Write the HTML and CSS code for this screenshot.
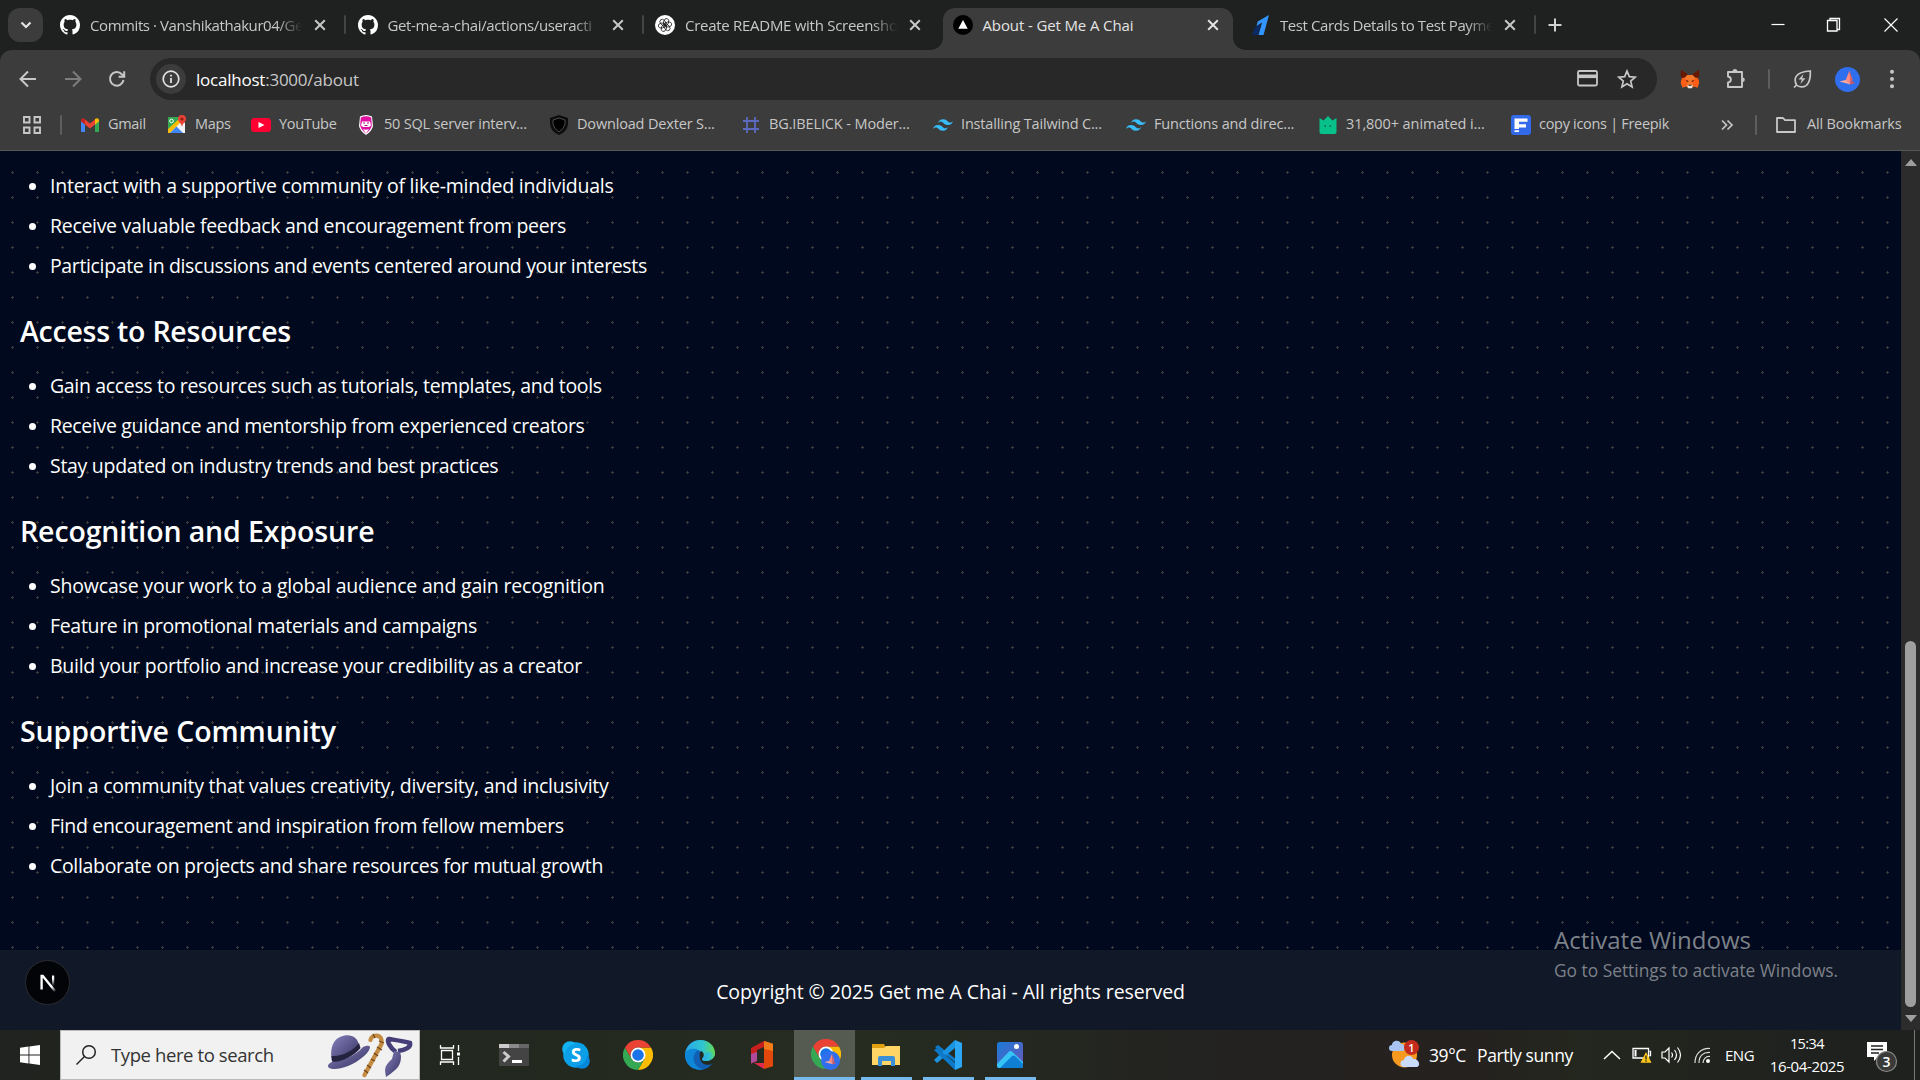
FILE: index.html
```html
<!DOCTYPE html>
<html lang="en">
<head>
<meta charset="utf-8">
<title>About - Get Me A Chai</title>
<link rel="stylesheet" href="styles.css">
</head>
<body>
<svg class="defs" aria-hidden="true">
  <symbol id="close" viewBox="0 0 20 20"><path d="M5.2 5.2l9.6 9.6M14.8 5.2l-9.6 9.6" stroke="currentColor" stroke-width="2" fill="none"/></symbol>
  <symbol id="github" viewBox="0 0 16 16"><path fill="#fff" d="M8 0C3.58 0 0 3.58 0 8c0 3.54 2.29 6.53 5.47 7.59.4.07.55-.17.55-.38 0-.19-.01-.82-.01-1.49-2.01.37-2.53-.49-2.69-.94-.09-.23-.48-.94-.82-1.13-.28-.15-.68-.52-.01-.53.63-.01 1.08.58 1.23.82.72 1.21 1.87.87 2.33.66.07-.52.28-.87.51-1.07-1.78-.2-3.64-.89-3.64-3.95 0-.87.31-1.59.82-2.15-.08-.2-.36-1.02.08-2.12 0 0 .67-.21 2.2.82.64-.18 1.32-.27 2-.27s1.36.09 2 .27c1.53-1.04 2.2-.82 2.2-.82.44 1.1.16 1.92.08 2.12.51.56.82 1.27.82 2.15 0 3.07-1.87 3.75-3.65 3.95.29.25.54.73.54 1.48 0 1.07-.01 1.93-.01 2.2 0 .21.15.46.55.38A8.01 8.01 0 0016 8c0-4.42-3.58-8-8-8z"/></symbol>
  <symbol id="tailwind" viewBox="0 0 24 24"><path fill="#38bdf8" d="M12 5c-3.2 0-5.2 1.6-6 4.8 1.2-1.6 2.6-2.2 4.2-1.8.9.2 1.6.9 2.3 1.6C13.700 10.900 15 12 18 12c3.200 0 5.200-1.600 6-4.800-1.200 1.600-2.600 2.200-4.200 1.800-.9-.2-1.600-.9-2.300-1.600C16.300 6.100 15 5 12 5zM6 12c-3.200 0-5.200 1.600-6 4.800 1.200-1.600 2.600-2.200 4.200-1.800.9.2 1.600.9 2.300 1.600C7.700 17.900 9 19 12 19c3.200 0 5.200-1.600 6-4.800-1.200 1.600-2.600 2.200-4.200 1.800-.9-.2-1.600-.9-2.300-1.600C10.300 13.100 9 12 6 12z"/></symbol>
  <symbol id="chrome" viewBox="0 0 48 48"><path fill="#fbbc04" d="M24 12h20.800A24 24 0 0124 48l10.400-18z"/><path fill="#34a853" d="M3.200 12A24 24 0 0024 48l10.400-18A12 12 0 0113.600 30z"/><path fill="#ea4335" d="M24 12h20.800A24 24 0 003.200 12l10.400 18A12 12 0 0124 12z"/><circle cx="24" cy="24" r="12" fill="#fff"/><circle cx="24" cy="24" r="9.300" fill="#1a73e8"/></symbol>
  <symbol id="origami" viewBox="0 0 25 25"><circle cx="12.500" cy="12.500" r="12.500" fill="#2f6fee"/><path fill="#ff8a80" d="M14.500 3.500l-4 10 5 4z"/><path fill="#e8605c" d="M14.500 3.500l3 9-2 5z"/><path fill="#ffab9f" d="M4.500 14.500l6-1.500 5 4.500z"/><path fill="#d4525a" d="M15 17.500l5-1.500-3-2z"/></symbol>
</svg>

<header class="tabstrip">
  <button class="tab-search"><svg width="14" height="14" viewBox="0 0 14 14"><path d="M2.500 4.500L7 9l4.500-4.500" fill="none" stroke="#e3e3e3" stroke-width="2.200"/></svg></button>
  <div class="tab"><svg class="fav"><use href="#github"/></svg><span class="title fade t1">Commits · Vanshikathakur04/Ge</span><svg class="x"><use href="#close"/></svg></div>
  <div class="tab"><svg class="fav"><use href="#github"/></svg><span class="title fade t2">Get-me-a-chai/actions/useracti</span><svg class="x"><use href="#close"/></svg></div>
  <div class="tab bare"><svg class="fav" viewBox="0 0 20 20"><circle cx="10" cy="10" r="10" fill="#fff"/><g fill="none" stroke="#222" stroke-width=".8"><ellipse cx="10" cy="7" rx="2.500" ry="3.800" transform="rotate(20 10 10)"/><ellipse cx="10" cy="7" rx="2.500" ry="3.800" transform="rotate(80 10 10)"/><ellipse cx="10" cy="7" rx="2.500" ry="3.800" transform="rotate(140 10 10)"/><ellipse cx="10" cy="7" rx="2.500" ry="3.800" transform="rotate(200 10 10)"/><ellipse cx="10" cy="7" rx="2.500" ry="3.800" transform="rotate(260 10 10)"/><ellipse cx="10" cy="7" rx="2.500" ry="3.800" transform="rotate(320 10 10)"/></g></svg><span class="title fade t3">Create README with Screensho</span><svg class="x"><use href="#close"/></svg></div>
  <div class="tab active"><svg class="fav" viewBox="0 0 20 20"><circle cx="10" cy="10" r="10" fill="#000"/><path d="M10 5l4.700 8.700H5.300z" fill="#fff"/></svg><span class="title t4">About - Get Me A Chai</span><svg class="x"><use href="#close"/></svg></div>
  <div class="tab"><svg class="fav" viewBox="0 0 20 20"><path fill="#0b2a63" d="M2 20l3-8 6-3-3 11z"/><path fill="#3395ff" d="M19 0l-5.500 20H8.500l3.600-12.500L6.500 11l1.200-4.500z"/></svg><span class="title fade t5">Test Cards Details to Test Payme</span><svg class="x"><use href="#close"/></svg></div>
  <svg class="newtab" viewBox="0 0 20 20"><path d="M10 3.500v13M3.500 10h13" stroke="#d0d0d0" stroke-width="2"/></svg>
  <div class="winctl">
    <svg viewBox="0 0 16 16"><path d="M1.500 7.500h13" stroke="#fff" stroke-width="1.200"/></svg>
    <svg viewBox="0 0 16 16"><path d="M1.500 3.500h9.500v10.500H1.500zM4 3.500v-2h9.500V12.500h-2" fill="none" stroke="#fff" stroke-width="1.300"/></svg>
    <svg viewBox="0 0 16 16"><path d="M1.500 1.500l13 13M14.500 1.500l-13 13" stroke="#fff" stroke-width="1.200"/></svg>
  </div>
</header>

<section class="chrome">
  <div class="toolbar">
    <svg class="nav" viewBox="0 0 20 20"><path d="M18 10H3M10 2.500L2.500 10l7.500 7.500" fill="none" stroke="#c7c7c7" stroke-width="2"/></svg>
    <svg class="nav" viewBox="0 0 20 20"><path d="M2 10h15M10 2.500l7.500 7.500-7.500 7.500" fill="none" stroke="#7d7d7d" stroke-width="2"/></svg>
    <svg class="nav" viewBox="0 0 20 20"><path d="M16.500 11A6.800 6.800 0 1114.800 5.200L17 7.300M17.200 2.200v5.600h-5.600" fill="none" stroke="#c7c7c7" stroke-width="2"/></svg>
    <div class="omnibox">
      <span class="site"><svg width="18" height="18" viewBox="0 0 18 18"><circle cx="9" cy="9" r="7.800" fill="none" stroke="#e3e3e3" stroke-width="1.700"/><path d="M9 8v5M9 4.800v1.800" stroke="#e3e3e3" stroke-width="1.800"/></svg></span>
      <span class="url"><b>localhost</b>:3000/about</span>
      <svg width="21" height="20" viewBox="0 0 21 20"><rect x="1" y="2" width="19" height="14.500" rx="1.500" fill="none" stroke="#c7c7c7" stroke-width="1.800"/><path d="M1 7.300h19" stroke="#c7c7c7" stroke-width="3.600"/></svg>
      <svg width="20" height="20" viewBox="0 0 20 20"><path d="M10 2l2.300 5.600 6 .5-4.600 3.900 1.400 5.900L10 14.700 4.900 17.900l1.400-5.900L1.700 8.100l6-.5z" fill="none" stroke="#c7c7c7" stroke-width="1.700"/></svg>
    </div>
    <div class="actions">
      <svg viewBox="0 0 20 20"><path fill="#f5772c" d="M3 6h14l2 7.500-1.500 5-4-1L12 19H8l-1.500-1.500-4 1L.8 13.500z"/><path fill="#ff5c16" d="M2.500 8L8 12l-1.500 5-4 1.500L.8 13.500zM17.500 8L12 12l1.500 5 4 1.500 1.700-5z"/><path fill="#661800" d="M1.200.8l6.500 4.700L5 8.500 2 9 .5 6zM18.800.8l-6.500 4.700L15 8.500l3 .5L19.500 6z"/><path fill="#3a1408" d="M5.500 10.800l3 1.200-.5 1.200zM14.500 10.800l-3 1.200.5 1.200z"/><path fill="#efe5df" d="M7.500 16h5l-.5 3.200H8z"/><path fill="#222" d="M8.500 15.800h3v1h-3z"/></svg>
      <svg viewBox="0 0 20 20"><path fill="none" stroke="#c7c7c7" stroke-width="1.900" stroke-linejoin="round" d="M2 3h14v15H2v-4.500c3.800-.5 3.800-5.500 0-6z"/><path fill="#c7c7c7" d="M6.500 2.500a2.500 2.500 0 015 0zM16.500 8.500a2.300 2.300 0 010 4.600z"/></svg>
      <i class="sep"></i>
      <svg viewBox="0 0 20 20"><path d="M2 18.500l2.500-2.500C1.500 10 2.500 3 18.300 2 18.800 12 15.500 18.200 9.500 17.800 7 17.800 5.500 17 4.500 16" fill="none" stroke="#c7c7c7" stroke-width="1.700"/><path d="M11.500 5l-5 5.500h3.300l-1.500 4.500 5.200-5.700h-3.300z" fill="#c7c7c7"/></svg>
      <svg class="avatar"><use href="#origami"/></svg>
      <svg viewBox="0 0 20 20" fill="#c7c7c7"><circle cx="10" cy="2.800" r="2"/><circle cx="10" cy="10" r="2"/><circle cx="10" cy="17.200" r="2"/></svg>
    </div>
  </div>
  <nav class="bookmarks">
    <svg class="apps" viewBox="0 0 18 18"><path d="M1 1h5.500v5.500H1zM11.500 1H17v5.500h-5.500zM1 11.500h5.500V17H1zM11.500 11.500H17V17h-5.500z" fill="none" stroke="#c7c7c7" stroke-width="1.900"/></svg>
    <i class="sep"></i>
    <a><svg viewBox="0 0 20 20"><path fill="#4285f4" d="M1 5l4 3v9H2a1 1 0 01-1-1z"/><path fill="#34a853" d="M19 5l-4 3v9h3a1 1 0 001-1z"/><path fill="#ea4335" d="M5 4.500l5 4 5-4v5l-5 4-5-4z"/><path fill="#c5221f" d="M1 5.500C1 3 3.500 2.500 5 4v5.500l-4-3z"/><path fill="#fbbc04" d="M19 5.500C19 3 16.500 2.500 15 4v5.500l4-3z"/></svg><span class="b1">Gmail</span></a>
    <a><svg viewBox="0 0 20 20"><path fill="#34a853" d="M1 2h15v16H1z"/><path fill="#f1f3f4" d="M1 16L14 4l4 4v10H4z"/><path fill="#fbbc04" d="M1 14L13 3l2 3L3 18H1z"/><path fill="#4285f4" d="M3 18l6.500-6.500L16 18z"/><circle cx="4.500" cy="6" r="1.800" fill="none" stroke="#fff"/><path fill="#ea4335" d="M15 0a4 4 0 014 4c0 3-3.500 4-4 8-.5-4-4-5-4-8a4 4 0 014-4z"/><circle cx="15" cy="4" r="1.500" fill="#8e1a13"/></svg><span class="b2">Maps</span></a>
    <a><svg viewBox="0 0 20 20"><rect y="3" width="20" height="14" rx="3.500" fill="#f03"/><path d="M7.500 7l6 3-6 3z" fill="#fff"/></svg><span class="b3">YouTube</span></a>
    <a><svg viewBox="0 0 20 20"><path fill="#fff" d="M4 1.500q6-3 12 0l1 9.500q-1 5-7 9-6-4-7-9z"/><path fill="#e010a0" d="M4.800 2.500q5-2.500 10.400 0l.6 8q-.8 4-5.800 8-5-4-5.800-8z"/><path fill="#fff" d="M6 6.500h8l1 4-2 1.500H7l-2-1.500zM7 14q3 1.500 6 0l-3 4.500z"/><path d="M7 8h2M11 8h2M8.500 10.500h3" stroke="#b00b80"/></svg><span class="b4">50 SQL server interv...</span></a>
    <a><svg viewBox="0 0 20 20"><path fill="#0d0d0d" d="M10 0l9 3v6q-1 8-9 11Q2 17 1 9V3z"/><path fill="#000" stroke="#4a4a4a" d="M10 3l6 2v4q-1 5-6 8-5-3-6-8V5z"/></svg><span class="b5">Download Dexter S...</span></a>
    <a><svg viewBox="0 0 20 20"><path d="M6 2v16M14 2v16M2 6h16M2 14h16" stroke="#5c6bc0" stroke-width="1.800"/></svg><span class="b6">BG.IBELICK - Moder...</span></a>
    <a><svg><use href="#tailwind"/></svg><span class="b7">Installing Tailwind C...</span></a>
    <a><svg><use href="#tailwind"/></svg><span class="b8">Functions and direc...</span></a>
    <a><svg viewBox="0 0 20 20"><path fill="#08c18a" d="M1.500 3l4 2.500L10 1l4.500 4.500 4-2.500v14a2 2 0 01-2 2h-13a2 2 0 01-2-2z"/><path d="M6.500 11h1.500M11.500 11h1.500" stroke="#064" stroke-width="1.500"/></svg><span class="b9">31,800+ animated i...</span></a>
    <a><svg viewBox="0 0 20 20"><rect width="20" height="20" rx="3" fill="#336aea"/><path d="M3.500 3.500h13v3.300H8v2.400h7v3.300H8V14H3.500zM3.500 15.200h4.500v1.800H3.500z" fill="#fff"/></svg><span class="b10">copy icons | Freepik</span></a>
    <svg class="more" viewBox="0 0 14 14"><path d="M2 2.500L6.500 7 2 11.500M7.500 2.500L12 7l-4.500 4.500" fill="none" stroke="#c7c7c7" stroke-width="1.700"/></svg>
    <i class="sep"></i>
    <a class="all"><svg viewBox="0 0 20 20"><path d="M1 3h6l2 2.200h10V17H1z" fill="none" stroke="#c7c7c7" stroke-width="1.800" stroke-linejoin="round"/></svg><span class="b11">All Bookmarks</span></a>
  </nav>
</section>

<main class="viewport">
  <div class="page">
    <div class="benefits">
      <ul>
        <li><span class="l1">Interact with a supportive community of like-minded individuals</span></li>
        <li><span class="l2">Receive valuable feedback and encouragement from peers</span></li>
        <li><span class="l3">Participate in discussions and events centered around your interests</span></li>
      </ul>
      <h2><span class="h1">Access to Resources</span></h2>
      <ul>
        <li><span class="l4">Gain access to resources such as tutorials, templates, and tools</span></li>
        <li><span class="l5">Receive guidance and mentorship from experienced creators</span></li>
        <li><span class="l6">Stay updated on industry trends and best practices</span></li>
      </ul>
      <h2><span class="h2">Recognition and Exposure</span></h2>
      <ul>
        <li><span class="l7">Showcase your work to a global audience and gain recognition</span></li>
        <li><span class="l8">Feature in promotional materials and campaigns</span></li>
        <li><span class="l9">Build your portfolio and increase your credibility as a creator</span></li>
      </ul>
      <h2><span class="h3">Supportive Community</span></h2>
      <ul>
        <li><span class="l10">Join a community that values creativity, diversity, and inclusivity</span></li>
        <li><span class="l11">Find encouragement and inspiration from fellow members</span></li>
        <li><span class="l12">Collaborate on projects and share resources for mutual growth</span></li>
      </ul>
    </div>
    <footer><span>Copyright © 2025 Get me A Chai - All rights reserved</span></footer>
  </div>
  <div class="scrollbar"><i class="up"></i><div class="track"><div class="thumb"></div></div><i class="down"></i></div>
  <div class="devtools"><svg width="18" height="20" viewBox="0 0 18 20"><defs><linearGradient id="fadeDown" x1="0" y1="0" x2="0" y2="1"><stop offset=".3" stop-color="#fff"/><stop offset="1" stop-color="#fff" stop-opacity="0"/></linearGradient><linearGradient id="fadeEnd" gradientUnits="userSpaceOnUse" x1="2" y1="2" x2="17" y2="19"><stop offset=".7" stop-color="#fff"/><stop offset="1" stop-color="#fff" stop-opacity="0"/></linearGradient></defs><path d="M2.600 16.500V3h1.200L16 18" fill="none" stroke="url(#fadeEnd)" stroke-width="2.300"/><path fill="url(#fadeDown)" d="M13 2.500h2.200V13H13z"/></svg></div>
  <div class="watermark"><p>Activate Windows</p><p class="small">Go to Settings to activate Windows.</p></div>
</main>

<footer class="taskbar">
  <div class="start"><svg width="20" height="20" viewBox="0 0 20 20" fill="#fff"><path d="M0 2.800l8.500-1.200v8H0zM9.400 1.500L20 0v9.600H9.400zM0 10.500h8.500v8L0 17.300zM9.400 10.500H20V20L9.400 18.600z"/></svg></div>
  <div class="search">
    <svg width="22" height="22" viewBox="0 0 22 22"><circle cx="14" cy="8" r="6.300" fill="none" stroke="#222" stroke-width="1.500"/><path d="M9.500 12.500L1.500 20.500" stroke="#222" stroke-width="1.500"/></svg>
    <span class="hint">Type here to search</span>
    <svg width="86" height="48" viewBox="0 0 86 48"><defs><linearGradient id="felt" x1="0" y1="0" x2="1" y2="1"><stop offset="0" stop-color="#8580bd"/><stop offset="1" stop-color="#37325f"/></linearGradient></defs><path fill="url(#felt)" d="M0 35c0 4 10 4 20 0C32 30 42 21 42 16c-1-2-4-1-7 0-8 9-21 14-29 14-3 1-6 3-6 5z"/><path fill="url(#felt)" d="M4 30C2 21 3 10 12 6c9-4 18-1 19 9-6 9-18 16-27 15z"/><path fill="#25223f" d="M3.500 25C13 26 25 20 31 12l1.500 5C26 25 13 32 4 30.500z"/><path d="M42.500 9c1-6 13-7 11 4L36.500 44" fill="none" stroke="#c38c42" stroke-width="4.300" stroke-linecap="round"/><path d="M45 3l2 4M51 10l5 2M49 16l5 3M46 22l4 3M43 28l4 2M39 34l4 3M36 39l4 3" stroke="#6f431b" stroke-width="1.300"/><path d="M68 21C62 17 58 9 61 8c6 1 14 2 21 4 1 4-4 7-12 8" fill="none" stroke="#453e78" stroke-width="4.500"/><path fill="url(#felt)" d="M66 20l6 1 1 4c0 9-3 13-15 21-1-7-3-10 6-18z"/></svg>
  </div>
  <div class="apps-row">
    <div class="view"><svg width="22" height="22" viewBox="0 0 22 22"><path d="M2.500 6.500h11v9h-11zM1.500 1v3h13V1M1.500 21v-3h13v3M19.500 1v6M19.500 13v8" fill="none" stroke="#fff" stroke-width="1.300"/><path fill="#fff" d="M18 8.500h3v3h-3z"/></svg></div>
    <div><svg width="30" height="22" viewBox="0 0 30 22"><rect width="30" height="22" rx="1" fill="#444"/><path fill="#ccc" d="M0 0h10v4H0z"/><path fill="#8a8a8a" d="M10 0h10v4H10z"/><path fill="#666" d="M20 0h10v4H20z"/><path d="M4.500 8l5 4.500-5 5" fill="none" stroke="#ccc" stroke-width="3"/><path d="M13 17.500h10" stroke="#fff" stroke-width="3"/></svg></div>
    <div><svg width="28" height="28" viewBox="0 0 28 28"><circle cx="14" cy="14" r="12.800" fill="#0aa1e8"/><circle cx="8" cy="8" r="7.800" fill="#12b3f0"/><circle cx="20" cy="20" r="7.800" fill="#0787db"/><circle cx="14" cy="14" r="11" fill="#0a9fe6"/><text x="14" y="21" text-anchor="middle" class="skype">S</text></svg></div>
    <div><svg width="30" height="30"><use href="#chrome"/></svg></div>
    <div><svg width="30" height="30" viewBox="0 0 30 30"><defs><linearGradient id="wave"><stop offset="0" stop-color="#2aa7ea"/><stop offset=".6" stop-color="#30c6d0"/><stop offset="1" stop-color="#63d94f"/></linearGradient></defs><circle cx="15" cy="15" r="15" fill="#1160b5"/><path fill="url(#wave)" d="M0 13C2 5 8 0 15 0c9 0 15 6 15 13 0 5-4 8-9 8-3 0-4-1-4-2 2-3 1-6-2-8C10 8 3 9 0 13z"/><path fill="#0f87d8" d="M0 13c3-5 10-5 13-3-5 3-6 10-2 15 2 3 5 4 8 4C8 32-1 24 0 13z"/><path fill="#232a20" d="M16 11c3 1 4 5 1 8 0 1 1 2 4 2 4 0 7-2 9-5v6l-2 1c-5 4-12 1-13-4-.5-3-1-6 1-8z"/><path fill="url(#wave)" d="M17 19c0 1 1 2 4 2 5 0 9-4 9-8l-8-1z"/></svg></div>
    <div><svg width="24" height="28" viewBox="0 0 24 28"><path fill="#c8201e" d="M1 7l13-7v6L7 9v11l-6 2.500z"/><path fill="#b04a9a" d="M1 13l6-2v9l-6 2.500z"/><path fill="#e2480c" d="M14 0l9 2.700v22.600L14 28z"/><path fill="#f27b1b" d="M14 0l9 2.700V10l-9-2z"/><path fill="#e12a4c" d="M4 22h10v6z"/></svg></div>
    <div class="running current"><svg width="32" height="32" viewBox="0 0 32 32"><use href="#chrome" width="30" height="30" x="2"/><use href="#origami" x="12" y="12" width="19" height="19"/></svg></div>
    <div class="running"><svg width="28" height="24" viewBox="0 0 28 24"><path fill="#e0a010" d="M0 1h12l2 4H0z"/><path fill="#ffd666" d="M0 5h12l2-2h14v19H0z"/><path fill="#3a8fd6" d="M6 23V15a2 2 0 012-2h13a2 2 0 012 2v8h-4v-5h-9v5z"/></svg></div>
    <div class="running"><svg width="30" height="30" viewBox="0 0 30 30"><path fill="#0c7ac8" d="M22 8v14L2 7l3-2 19 15z"/><path fill="#1a94e0" d="M1 20L22 0v8L4 23z"/><path fill="#0c7ac8" d="M1 10l3-2 18 15v7z"/><path fill="#2ba7f5" d="M22 0l7 3v24l-7 3z"/></svg></div>
    <div class="running"><svg width="26" height="26" viewBox="0 0 26 26"><defs><linearGradient id="sky" x1="0" y1="0" x2="1" y2="1"><stop offset="0" stop-color="#1a7bd8"/><stop offset="1" stop-color="#6c56b8"/></linearGradient><clipPath id="frame"><rect width="26" height="26" rx="2.500"/></clipPath></defs><g clip-path="url(#frame)"><path fill="url(#sky)" d="M0 0h26v26H0z"/><path fill="#36c3f6" d="M0 22L12 9.500q1.500-1 3 0L26 20v6H0z"/><path fill="#0f7fd6" d="M3 26l12-12q1.500-1 3 0l8 8v4z"/></g><circle cx="19.500" cy="4.500" r="2.500" fill="#fff"/></svg></div>
  </div>
  <div class="tray">
    <svg class="weather" width="31" height="30" viewBox="0 0 31 30"><circle cx="15.500" cy="15" r="12.500" fill="#f59a1f"/><path fill="#a9c4f0" d="M3 11a3 3 0 010-6c0-5 8-6 9-1 4-1 5 6 2 7z"/><path fill="#c9dafa" d="M15 27a3.500 3.500 0 010-7c1-6 9-5 9-1 6-1 8 7 4 8z"/><circle cx="22.500" cy="7.500" r="7.500" fill="#c42b1c"/><text x="22.500" y="11.500" text-anchor="middle" class="count">1</text></svg>
    <span class="temp">39°C</span><span class="cond">Partly sunny</span>
    <svg class="chev" width="18" height="10" viewBox="0 0 18 10"><path d="M1 9l8-7.500L17 9" fill="none" stroke="#fff" stroke-width="1.500"/></svg>
    <svg class="batt" width="20" height="16" viewBox="0 0 20 16"><path d="M1 1.500h15.500v9.500H1zM17.500 4.500h1v4h-1" fill="none" stroke="#fff" stroke-width="1.300"/><path fill="#fff" d="M2.500 3h2v6.500h-2z"/><path fill="#ffc61a" d="M14 5l5.500 10.800h-11z"/><path d="M14 8.500v4M14 13.300v1.400" stroke="#222" stroke-width="1.300"/></svg>
    <svg class="vol" width="21" height="18" viewBox="0 0 21 18"><path d="M1 6h3l4-4v14l-4-4H1zM10.500 6.500q2 2.500 0 5M13.500 4q4 5 0 10M16.500 1.500q6 7.500 0 15" fill="none" stroke="#fff" stroke-width="1.200"/></svg>
    <svg class="wifi" width="17" height="17" viewBox="0 0 17 17"><path d="M1 16C1 7 7 1 16 1.500M5 16C5 9 9 5 16 5.500M9 16c0-4 3-7 7-6.500" fill="none" stroke="#ddd" stroke-width="1.200"/><circle cx="14" cy="14" r="2" fill="#fff"/></svg>
    <span class="lang">ENG</span>
    <span class="clock"><span class="time">15:34</span><span class="date">16-04-2025</span></span>
    <span class="notif"><svg width="32" height="32" viewBox="0 0 32 32"><path fill="#fff" d="M0 1h20v15h-9l-4 4v-4H0z"/><path d="M4 5h12M4 8.500h12M4 12h8" stroke="#222" stroke-width="1.400"/><circle cx="19.500" cy="20.500" r="10" fill="#3a3b39" stroke="#888" stroke-width="1.200"/><text x="19.500" y="25.500" text-anchor="middle" class="badge">3</text></svg></span>
  </div>
</footer>
</body>
</html>
```
FILE: styles.css
```css
* { box-sizing: border-box; margin: 0; padding: 0; }
body { width: 1920px; height: 1080px; overflow: hidden; display: flex; flex-direction: column; background: #1f2121; font-family: "Open Sans", "Noto Sans", sans-serif; }
svg { display: block; flex: none; }
.defs { position: absolute; width: 0; height: 0; }
span { white-space: nowrap; }

/* tab strip */
.tabstrip { height: 50px; display: flex; align-items: center; padding-left: 8px; color: #c7c7c7; }
.tab-search { width: 35px; height: 34px; margin-right: 5px; border: 0; border-radius: 12px; background: #3c3c3c; display: grid; place-items: center; }
.tab { width: 297.5px; height: 50px; display: flex; align-items: center; padding-left: 12px; position: relative; }
.tab::after { content: ""; position: absolute; right: -.5px; top: 15px; width: 2px; height: 19px; background: #444; border-radius: 1px; }
.tab.bare::after { display: none; }
.fav { width: 20px; height: 20px; margin-right: 10px; z-index: 1; }
.title { width: 212px; height: 28px; line-height: 28px; font-size: 15px; z-index: 1; }
.fade { -webkit-mask-image: linear-gradient(90deg, #000 88%, transparent 100%); mask-image: linear-gradient(90deg, #000 88%, transparent 100%); }
.t1 { letter-spacing: -.42px; }
.t2 { letter-spacing: -.36px; }
.t3 { letter-spacing: -.28px; }
.t4 { letter-spacing: -.12px; }
.t5 { letter-spacing: -.42px; }
.x { width: 20px; height: 20px; margin-left: 8px; z-index: 1; }
.active { color: #e3e3e3; }
.active::before { content: ""; position: absolute; left: 2px; right: 5px; top: 8px; bottom: 0; background: #3c3c3c; border-radius: 12px 12px 0 0; }
.tab.active::after { left: -10px; right: -7px; top: auto; bottom: 0; width: auto; height: 12px; border-radius: 0; background: radial-gradient(circle at 0 0, transparent 11.5px, #3c3c3c 12px) left / 12px 12px no-repeat, radial-gradient(circle at 100% 0, transparent 11.5px, #3c3c3c 12px) right / 12px 12px no-repeat; }
.newtab { width: 20px; height: 20px; margin-left: 9px; }
.winctl { margin-left: auto; padding-right: 1px; display: grid; grid-template-columns: repeat(3, 56.5px); justify-items: center; }
.winctl svg { width: 16px; height: 16px; }

/* toolbar */
.chrome { height: 101px; background: #3c3c3c; border-radius: 12px 12px 0 0; border-bottom: 1px solid #565656; }
.toolbar { height: 58px; display: flex; align-items: center; padding-left: 18px; }
.nav { width: 20px; height: 20px; margin-right: 24.5px; }
.omnibox { width: 1507px; height: 42px; margin-left: -1.5px; border-radius: 21px; background: #282828; display: flex; align-items: center; padding: 0 20px 0 6px; }
.site { width: 30px; height: 30px; border-radius: 50%; background: #3c3c3c; display: grid; place-items: center; margin-right: 10px; }
.url { flex: 1; font-size: 17px; letter-spacing: -.23px; color: #c7c7c7; }
.url b { font-weight: 400; color: #fff; }
.omnibox > svg + svg { margin-left: 19px; }
.actions { display: grid; grid-template-columns: 46px 46px 19px 48px 43px 46px; margin-left: 10px; align-items: center; justify-items: center; }
.actions svg { width: 20px; height: 20px; }
.actions .avatar { width: 25px; height: 25px; }
.sep { width: 2px; height: 20px; background: #5e5e5e; border-radius: 1px; }

/* bookmarks */
.bookmarks { height: 34px; display: grid; grid-template-columns: 37px 20px 87px 84px 105px 193px 192px 192px 193px 192px 193px 209px 34.5px 21.5px 130px; padding-left: 23px; align-items: center; color: #c7c7c7; font-size: 14.5px; }
.bookmarks a { display: flex; align-items: center; gap: 8px; }
.bookmarks a svg { width: 20px; height: 20px; }
.bookmarks a span { line-height: 20px; padding-bottom: 2px; }
.bookmarks .all { gap: 11px; }
.b1, .b3, .b10 { letter-spacing: -.3px; }
.b2 { letter-spacing: -.35px; }
.b4 { letter-spacing: -.2px; }
.b5, .b7, .b8, .b11 { letter-spacing: -.17px; }
.b6 { letter-spacing: -.12px; }
.b9 { letter-spacing: -.08px; }
.apps { width: 18px; height: 18px; }
.more { width: 14px; height: 14px; }

/* page */
.viewport { height: 879px; display: flex; position: relative; color: #fff; font-size: 19.5px; }
.page { width: 1901px; display: flex; flex-direction: column; background: radial-gradient(#3b3b3b 1.25px, #00091d 1.25px) 0 9px / 25px 25px; }
.benefits { flex: 1; padding: 20px; }
.benefits ul { list-style: none; display: grid; gap: 10px; }
.benefits li { height: 30px; line-height: 30px; padding-left: 30px; position: relative; }
.benefits li::before { content: ""; position: absolute; left: 9px; top: 12px; width: 7px; height: 7px; border-radius: 50%; background: #fff; }
.benefits h2 { height: 90px; padding-top: 30px; line-height: 40px; font-size: 28.5px; font-weight: 600; }
.l1 { letter-spacing: -.236px; }
.l2 { letter-spacing: -.304px; }
.l3 { letter-spacing: -.36px; }
.l4, .l5 { letter-spacing: -.335px; }
.l6 { letter-spacing: -.295px; }
.l7 { letter-spacing: -.18px; }
.l8, .l11, .l12 { letter-spacing: -.324px; }
.l9 { letter-spacing: -.276px; }
.l10 { letter-spacing: -.24px; }
.h1 { letter-spacing: -.24px; }
.h2 { letter-spacing: -.12px; }
.h3 { letter-spacing: -.09px; }
.page > footer { height: 80px; padding-top: 2px; background: #111827; display: grid; place-items: center; letter-spacing: -.08px; }
.scrollbar { width: 19px; background: #2c2c2c; display: flex; flex-direction: column; align-items: center; padding: 8px 0; }
.track { flex: 1; width: 11px; padding-top: 475px; }
.thumb { height: 366px; border-radius: 6px; background: #9f9f9f; }
.up { border: 6px solid transparent; border-top: 0; border-bottom: 7px solid #9f9f9f; }
.down { border: 6px solid transparent; border-bottom: 0; border-top: 7px solid #9f9f9f; }
.devtools { position: absolute; left: 25px; top: 809px; width: 45px; height: 45px; border-radius: 50%; background: #030408; border: 1px solid #2a2c30; display: grid; place-items: center; }
.watermark { position: absolute; left: 1554px; top: 771px; color: #7d8189; font-size: 24px; line-height: 36px; }
.watermark .small { font-size: 17.35px; line-height: 24px; }

/* taskbar */
.taskbar { height: 50px; display: flex; background: linear-gradient(90deg, #20231f, #262c20 45%, #232321 62%, #25211f 76%, #24271e 82%, #1f211f 95%); color: #fff; font-size: 17.5px; }
.start { width: 60px; display: grid; place-items: center; }
.search { width: 360px; background: #f1f1f1; border: 1px solid #bbb; display: flex; align-items: center; padding-left: 14px; color: #333; }
.hint { width: 217px; margin-left: 14px; padding-bottom: 2px; font-size: 18.5px; letter-spacing: -.4px; }
.apps-row { display: grid; grid-template-columns: 63px repeat(9, 62px); }
.apps-row > div { display: grid; place-items: center; position: relative; }
.apps-row .view { padding-right: 3px; }
.running::after { content: ""; position: absolute; left: 6px; right: 5px; bottom: 0; height: 3px; background: #76b9ed; }
.current { background: #555b50; margin-left: 1px; }
.current::after { left: 0; right: 0; }
.skype { font: 700 19px "Open Sans", sans-serif; fill: #fff; }
.count { font: 600 11px "Open Sans", sans-serif; fill: #fff; }
.badge { font: 600 14px "Open Sans", sans-serif; fill: #fff; }
.tray { flex: 1; display: flex; align-items: center; padding-left: 348px; position: relative; }
.tray::after { content: ""; position: absolute; right: 5px; top: 0; bottom: 0; width: 1px; background: #777; }
.temp { margin-left: 9px; width: 48px; letter-spacing: -.4px; }
.cond { width: 126px; letter-spacing: -.4px; }
.batt { margin-left: 11px; }
.vol { margin-left: 9px; }
.wifi { margin-left: 12px; }
.lang { margin-left: 14px; width: 39px; font-size: 15px; letter-spacing: -.5px; }
.clock { width: 86px; padding-bottom: 1px; display: grid; justify-items: center; font-size: 15px; line-height: 22px; }
.time { font-size: 14.5px; letter-spacing: -.55px; }
.date { letter-spacing: -.38px; }
.notif { margin-left: 17px; padding-top: 3px; }
```
